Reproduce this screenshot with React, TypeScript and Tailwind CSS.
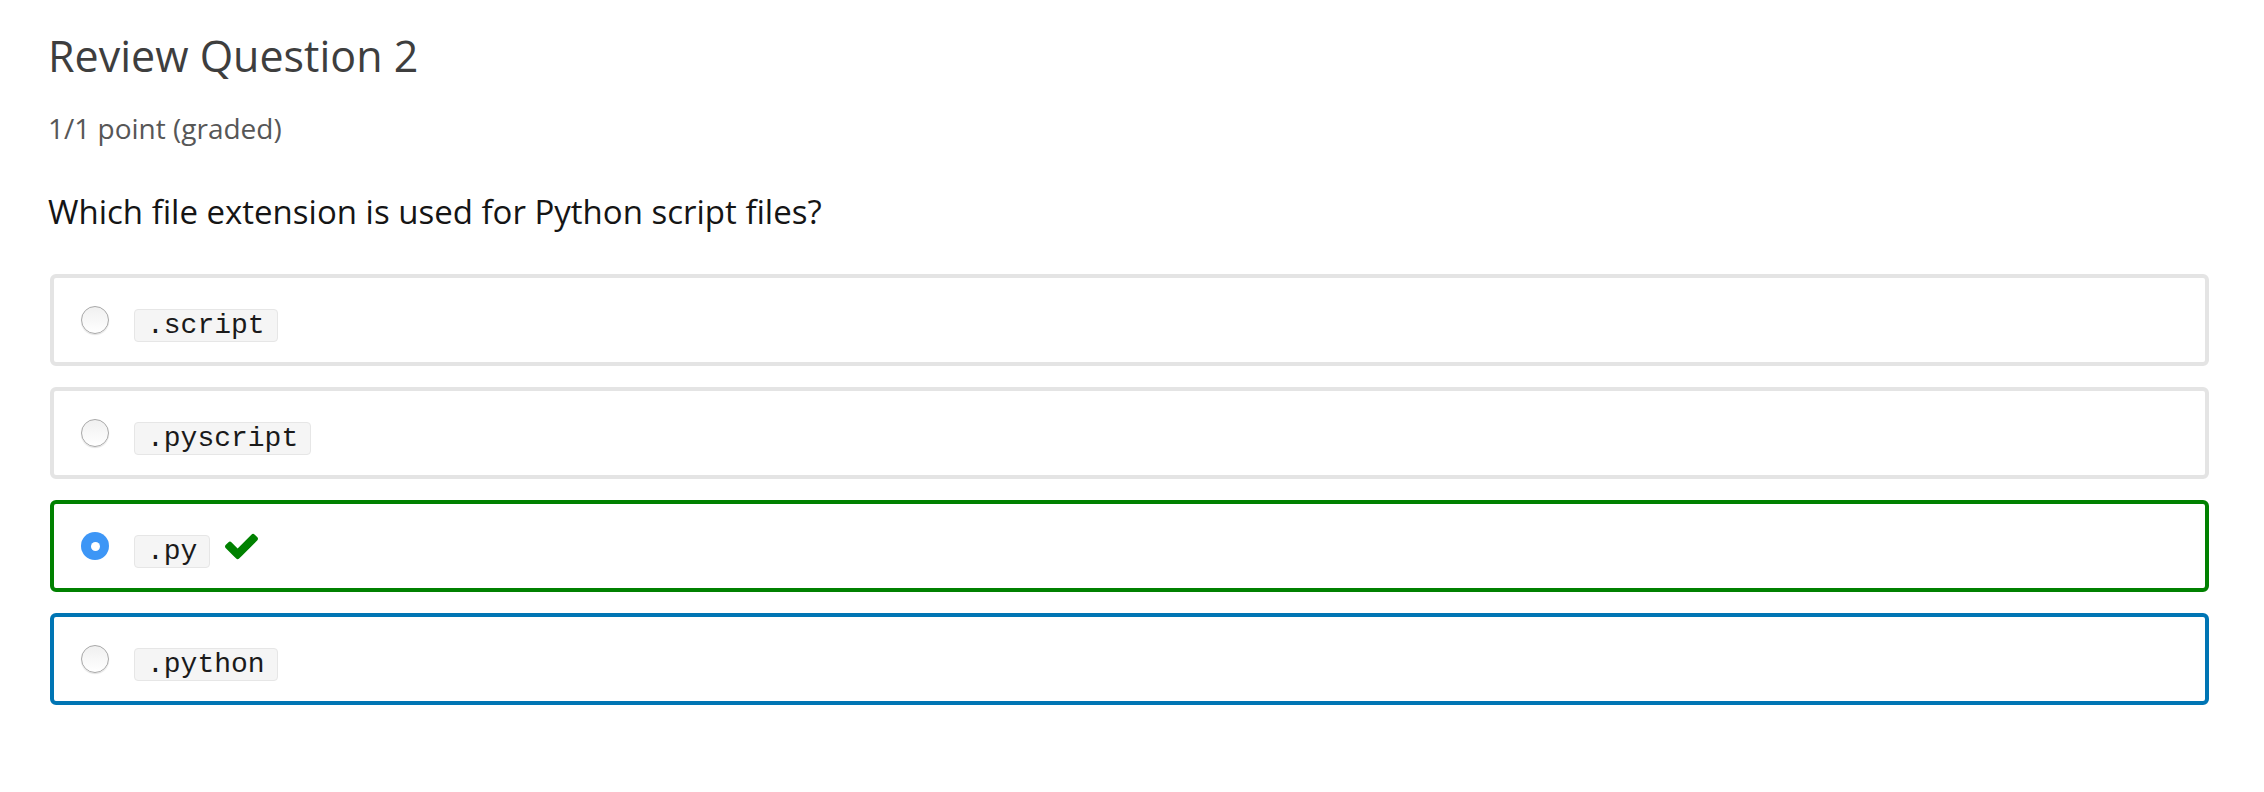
import React from "react";

type Choice = {
  label: string;
  state: "idle" | "correct" | "focused";
};

const choices: Choice[] = [
  { label: ".script", state: "idle" },
  { label: ".pyscript", state: "idle" },
  { label: ".py", state: "correct" },
  { label: ".python", state: "focused" },
];

function Radio({ checked }: { checked: boolean }) {
  if (checked) {
    return (
      <span className="flex h-[28px] w-[28px] shrink-0 items-center justify-center rounded-full bg-[#3d96f6]">
        <span className="h-[9px] w-[9px] rounded-full bg-white" />
      </span>
    );
  }
  return (
    <span className="h-[28px] w-[28px] shrink-0 rounded-full border border-[#a8a8a8] bg-gradient-to-b from-[#f0f0f0] to-white shadow-[0_1px_1px_rgba(0,0,0,0.12)]" />
  );
}

function Check() {
  return (
    <svg width="33" height="27" viewBox="121 334 1550 1188" className="ml-[15px] -mt-[10px] shrink-0">
      <path
        fill="#008100"
        d="M1671 566q0 40-28 68l-724 724-136 136q-28 28-68 28t-68-28l-136-136-362-362q-28-28-28-68t28-68l136-136q28-28 68-28t68 28l294 295 656-657q28-28 68-28t68 28l136 136q28 28 28 68z"
      />
    </svg>
  );
}

export default function App(): React.ReactNode {
  return (
    <div className="min-h-[792px] w-full bg-white pl-[48px] pr-[55px] font-['Open_Sans',sans-serif]">
      <h3 className="pt-[34px] text-[43px] leading-none font-normal text-[#3e3e3e]">
        Review Question 2
      </h3>
      <div className="mt-[37px] text-[28px] leading-none text-[#575757]">1/1 point (graded)</div>
      <p className="mt-[53px] text-[33px] leading-none text-[#151515]">
        Which file extension is used for Python script files?
      </p>
      <div className="mt-[46px] ml-[2px] flex flex-col gap-[21px]">
        {choices.map((c) => (
          <label
            key={c.label}
            className={
              "flex h-[92px] items-center rounded-[6px] border-[4px] pl-[27px] " +
              (c.state === "correct"
                ? "border-[#008100]"
                : c.state === "focused"
                  ? "border-[#0075b4]"
                  : "border-[#e4e4e4]")
            }
          >
            <Radio checked={c.state === "correct"} />
            <span className="mt-[11px] ml-[25px] flex items-center">
              <code className="rounded-[4px] border border-[#e6e6e6] bg-[#f5f5f5] px-[12px] py-[2px] font-['Liberation_Mono',monospace] text-[28px] leading-[27px] text-[#1a1a1a]">
                {c.label}
              </code>
              {c.state === "correct" && <Check />}
            </span>
          </label>
        ))}
      </div>
    </div>
  );
}
